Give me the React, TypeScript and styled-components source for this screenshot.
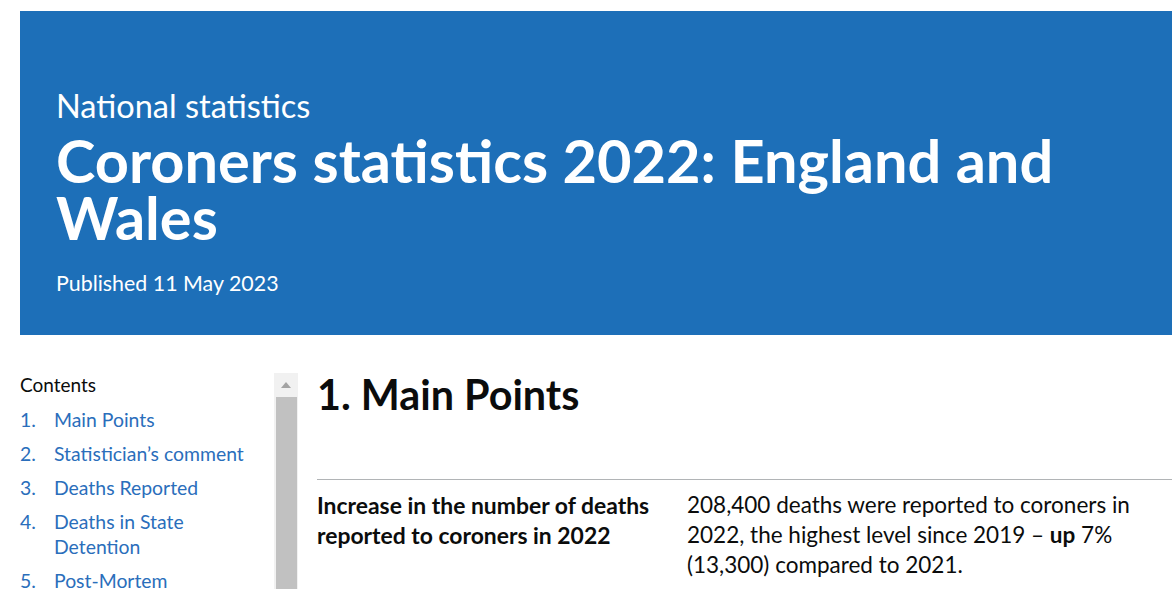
import React from 'react';
import styled, { createGlobalStyle } from 'styled-components';

const GlobalStyle = createGlobalStyle`
  html, body {
    margin: 0;
    padding: 0;
    overflow: hidden;
    background: #ffffff;
  }
  body {
    font-family: Lato, "Noto Sans", Arial, sans-serif;
    color: #0b0c0c;
  }
`;

const contents = [
  'Main Points',
  'Statistician’s comment',
  'Deaths Reported',
  'Deaths in State Detention',
  'Post-Mortem Examinations',
  'Inquests',
];

const App = () => (
  <>
    <GlobalStyle />
    <Page>
      <Banner>
        <Caption>National statistics</Caption>
        <Title>Coroners statistics 2022: England and Wales</Title>
        <Published>Published 11 May 2023</Published>
      </Banner>
      <Body>
        <Sidebar>
          <ContentsLabel>Contents</ContentsLabel>
          <ContentsList>
            {contents.map((item, i) => (
              <ContentsItem key={item}>
                <ItemNumber>{i + 1}.</ItemNumber>
                <ItemLink href="#">{item}</ItemLink>
              </ContentsItem>
            ))}
          </ContentsList>
        </Sidebar>
        <ScrollTrack>
          <ScrollButton>
            <svg width="10" height="6" viewBox="0 0 10 6">
              <path d="M5 0 L10 6 L0 6 Z" fill="#a3a3a3" />
            </svg>
          </ScrollButton>
          <ScrollThumb />
        </ScrollTrack>
        <Main>
          <SectionHeading>1. Main Points</SectionHeading>
          <Divider />
          <PointRow>
            <PointTitle>Increase in the number of deaths reported to coroners in 2022</PointTitle>
            <PointText>
              208,400 deaths were reported to coroners in 2022, the highest level since 2019 –{' '}
              <strong>up</strong> 7% (13,300) compared to 2021.
            </PointText>
          </PointRow>
        </Main>
      </Body>
    </Page>
  </>
);

export default App;

const Page = styled.div`
  padding: 11px 1px 0 20px;
`;

const Banner = styled.header`
  background: #1d6fb8;
  color: #ffffff;
  padding: 77px 36px 38px;
`;

const Caption = styled.div`
  font-size: 32.5px;
  line-height: 36px;
  font-weight: 400;
`;

const Title = styled.h1`
  margin: 8px 0 0;
  font-size: 59.5px;
  line-height: 57px;
  font-weight: 700;
  max-width: 1080px;
`;

const Published = styled.div`
  margin-top: 23px;
  font-size: 21.4px;
  line-height: 28px;
`;

const Body = styled.div`
  display: flex;
  margin-top: 38px;
  height: 400px;
`;

const Sidebar = styled.nav`
  width: 254px;
`;

const ContentsLabel = styled.div`
  font-size: 19px;
  line-height: 24px;
`;

const ContentsList = styled.ol`
  list-style: none;
  margin: 10px 0 0;
  padding: 0;
`;

const ContentsItem = styled.li`
  display: flex;
  font-size: 19.4px;
  line-height: 25px;
  margin-bottom: 9px;
  padding-right: 24px;
`;

const ItemNumber = styled.span`
  flex: 0 0 34px;
  color: #2a6ebb;
`;

const ItemLink = styled.a`
  color: #2a6ebb;
  text-decoration: none;
`;

const ScrollTrack = styled.div`
  width: 24px;
  background: #f1f1f1;
  display: flex;
  flex-direction: column;
  align-items: center;
`;

const ScrollButton = styled.div`
  height: 24px;
  width: 100%;
  display: flex;
  align-items: center;
  justify-content: center;
`;

const ScrollThumb = styled.div`
  flex: 1;
  width: 21px;
  background: #c1c1c1;
`;

const Main = styled.main`
  flex: 1;
  padding-left: 19px;
`;

const SectionHeading = styled.h2`
  margin: -3px 0 0;
  font-size: 41.3px;
  line-height: 48px;
  font-weight: 700;
`;

const Divider = styled.hr`
  margin: 61px 0 0;
  border: 0;
  border-top: 1px solid #b1b4b6;
`;

const PointRow = styled.div`
  display: grid;
  grid-template-columns: 370px 1fr;
  padding-top: 10px;
`;

const PointTitle = styled.div`
  font-size: 22.9px;
  line-height: 30px;
  font-weight: 700;
  padding-right: 20px;
`;

const PointText = styled.div`
  font-size: 22.5px;
  line-height: 30px;
  max-width: 475px;

  strong {
    font-weight: 700;
  }
`;
